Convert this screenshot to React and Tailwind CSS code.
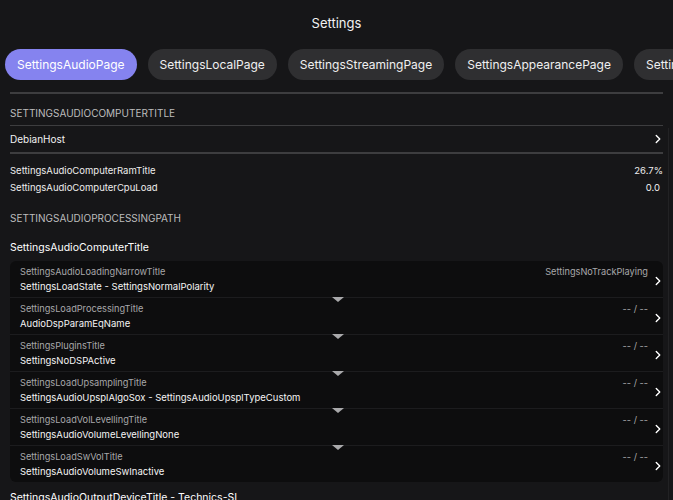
import { ChevronRight } from 'lucide-react';

const tabs = ['SettingsAudioPage', 'SettingsLocalPage', 'SettingsStreamingPage', 'SettingsAppearancePage', 'SettingsOtherPage'];

const pathRows = [
  { title: 'SettingsAudioLoadingNarrowTitle', value: 'SettingsLoadState - SettingsNormalPolarity', right: 'SettingsNoTrackPlaying' },
  { title: 'SettingsLoadProcessingTitle', value: 'AudioDspParamEqName', right: '-- / --' },
  { title: 'SettingsPluginsTitle', value: 'SettingsNoDSPActive', right: '-- / --' },
  { title: 'SettingsLoadUpsamplingTitle', value: 'SettingsAudioUpsplAlgoSox - SettingsAudioUpsplTypeCustom', right: '-- / --' },
  { title: 'SettingsLoadVolLevellingTitle', value: 'SettingsAudioVolumeLevellingNone', right: '-- / --' },
  { title: 'SettingsLoadSwVolTitle', value: 'SettingsAudioVolumeSwInactive', right: '-- / --' },
];

const Chevron = () => (
  <ChevronRight size={14} strokeWidth={2.4} className="text-white shrink-0" />
);

const App = () => {
  return (
    <div className="relative w-[673px] h-[500px] overflow-hidden bg-[#161618] text-white" style={{ fontFamily: 'Inter, "Noto Sans", sans-serif' }}>
      <div className="h-[44px] pt-[3px] flex items-center justify-center text-[13px] text-[#f2f2f2]">Settings</div>

      <div className="flex gap-[11px] pl-[5px] pt-[5px] whitespace-nowrap">
        {tabs.map((t, i) => (
          <div
            key={t}
            className={
              i === 0
                ? 'h-[31px] px-[12px] shrink-0 flex items-center rounded-full bg-[#8583ef] text-[12px] text-white'
                : 'h-[31px] px-[12px] shrink-0 flex items-center rounded-full bg-[#2f2f31] text-[12px] text-[#f0f0f0]'
            }
          >
            {t}
          </div>
        ))}
      </div>

      <div className="pl-[10px] pr-[10px]">
        <div className="mt-[12px] h-[2px] bg-[#3d3d3f]" />

        <div className="pt-[13px] pb-[6px] leading-[12px] text-[10px] text-[#bdbdbd]">SETTINGSAUDIOCOMPUTERTITLE</div>
        <div className="h-[1px] bg-[#3d3d3f]" />
        <div className="h-[26px] flex items-center justify-between text-[10px] text-[#f2f2f2]">
          <span>DebianHost</span>
          <span className="-mr-[2px]"><Chevron /></span>
        </div>
        <div className="h-[2px] bg-[#3d3d3f]" />

        <div className="pt-[10px] flex flex-col gap-[3px] text-[9.5px] text-[#eeeeee]">
          <div className="h-[14px] flex items-center justify-between">
            <span>SettingsAudioComputerRamTitle</span>
            <span>26.7%</span>
          </div>
          <div className="h-[14px] flex items-center justify-between">
            <span>SettingsAudioComputerCpuLoad</span>
            <span className="pr-[3px]">0.0</span>
          </div>
        </div>

        <div className="h-[46px] flex items-center text-[10px] text-[#bdbdbd]">SETTINGSAUDIOPROCESSINGPATH</div>
        <div className="h-[14px] flex items-center text-[10.5px] text-white">SettingsAudioComputerTitle</div>

        <div className="mt-[6px] rounded-[6px] bg-[#0d0d0e] overflow-hidden">
          {pathRows.map((r, i) => (
            <div key={r.title} className={i === 0 ? 'relative h-[36px] flex items-center pl-[10px]' : 'relative h-[37px] flex items-center pl-[10px] border-t border-[#1c1c1e]'}>
              {i > 0 && (
                <div className="absolute top-[-1px] left-[322px] w-0 h-0 border-l-[6px] border-r-[6px] border-t-[5px] border-l-transparent border-r-transparent border-t-[#a9a9ab]" />
              )}
              <div className="flex-1 flex flex-col gap-[3px] pt-[1px]">
                <div className="flex justify-between text-[9.2px] text-[#a8a8aa] leading-[12px]">
                  <span>{r.title}</span>
                  <span>{r.right}</span>
                </div>
                <div className="text-[9.5px] text-[#f4f4f4] leading-[12px]">{r.value}</div>
              </div>
              <div className="pl-[3px] pt-[4px] -mr-[2px]">
                <Chevron />
              </div>
            </div>
          ))}
        </div>

        <div className="mt-[8px] text-[10.5px] text-white whitespace-nowrap">SettingsAudioOutputDeviceTitle - Technics-SL</div>
      </div>

      <div className="absolute right-[4px] top-[128px] bottom-0 w-px bg-[#222224]" />
    </div>
  );
};

export default App;
